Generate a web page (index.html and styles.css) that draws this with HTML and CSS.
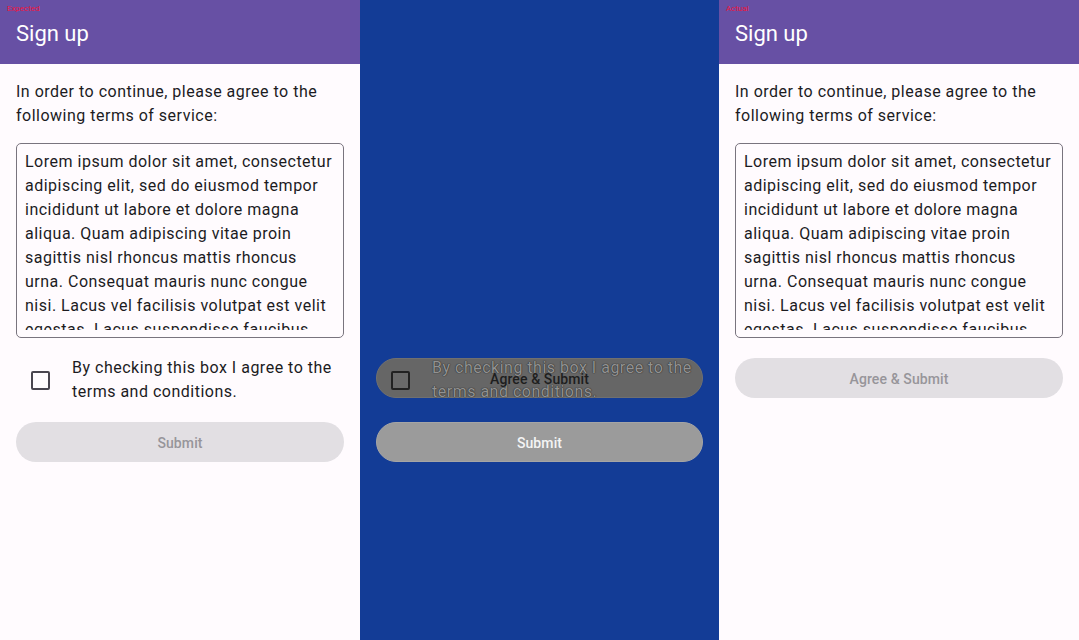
FILE: index.html
```html
<!DOCTYPE html>
<html>
<head>
<meta charset="utf-8">
<link rel="stylesheet" href="styles.css">
</head>
<body>
<div class="frame">
  <section class="panel">
    <span class="tag">Expected</span>
    <header class="appbar">Sign up</header>
    <div class="content">
      <p class="intro">In order to continue, please agree to the following terms of service:</p>
      <div class="terms"><div class="terms-inner">Lorem ipsum dolor sit amet, consectetur adipiscing elit, sed do eiusmod tempor incididunt ut labore et dolore magna aliqua. Quam adipiscing vitae proin sagittis nisl rhoncus mattis rhoncus urna. Consequat mauris nunc congue nisi. Lacus vel facilisis volutpat est velit egestas. Lacus suspendisse faucibus interdum posuere lorem ipsum dolor sit amet.</div></div>
      <div class="check-row">
        <div class="check-target"><span class="checkbox"></span></div>
        <span class="check-label">By checking this box I agree to the terms and conditions.</span>
      </div>
      <div class="btn btn-disabled btn-submit">Submit</div>
    </div>
  </section>

  <section class="panel diff">
    <div class="diff-content">
      <div class="diff-stack">
        <div class="diff-pill"></div>
        <div class="check-row ghost">
          <div class="check-target"><span class="checkbox ghost-box"></span></div>
          <span class="check-label ghost-label">By checking this box I agree to the terms and conditions.</span>
        </div>
        <div class="diff-agree">Agree &amp; Submit</div>
      </div>
      <div class="btn diff-submit">Submit</div>
    </div>
  </section>

  <section class="panel">
    <span class="tag">Actual</span>
    <header class="appbar">Sign up</header>
    <div class="content">
      <p class="intro">In order to continue, please agree to the following terms of service:</p>
      <div class="terms"><div class="terms-inner">Lorem ipsum dolor sit amet, consectetur adipiscing elit, sed do eiusmod tempor incididunt ut labore et dolore magna aliqua. Quam adipiscing vitae proin sagittis nisl rhoncus mattis rhoncus urna. Consequat mauris nunc congue nisi. Lacus vel facilisis volutpat est velit egestas. Lacus suspendisse faucibus interdum posuere lorem ipsum dolor sit amet.</div></div>
      <div class="btn btn-disabled btn-agree">Agree &amp; Submit</div>
    </div>
  </section>
</div>
</body>
</html>
```

FILE: styles.css
```css
* { box-sizing: border-box; }
html, body {
  margin: 0;
  padding: 0;
  width: 1079px;
  height: 640px;
  overflow: hidden;
  font-family: Roboto, "Noto Sans", "Liberation Sans", sans-serif;
}
.frame {
  display: grid;
  grid-template-columns: 360px 359px 360px;
  height: 640px;
}
.panel {
  position: relative;
  background: #FFFBFE;
  height: 640px;
  display: flex;
  flex-direction: column;
}
.tag {
  position: absolute;
  left: 7px;
  top: 4px;
  font-size: 8px;
  line-height: 10px;
  color: #f0143c;
}
.appbar {
  height: 64px;
  flex: none;
  background: #6750A4;
  color: #ffffff;
  font-size: 22px;
  line-height: 28px;
  padding: 20px 16px 16px;
}
.content {
  padding: 16px 16px 0;
  display: flex;
  flex-direction: column;
  color: #1C1B1F;
}
.intro {
  margin: 0;
  font-size: 16px;
  line-height: 24px;
  letter-spacing: 0.5px;
}
.terms {
  margin-top: 15px;
  border: 1px solid #79747E;
  border-radius: 5px;
  padding: 6px 8px 7px;
}
.terms-inner {
  height: 180px;
  overflow: hidden;
  font-size: 16px;
  line-height: 24px;
  letter-spacing: 0.5px;
}
.check-row {
  display: flex;
  align-items: center;
  margin-top: 18px;
}
.check-target {
  width: 48px;
  height: 48px;
  flex: none;
  display: flex;
  align-items: center;
  justify-content: center;
}
.checkbox {
  width: 19px;
  height: 19px;
  border: 2px solid #49454F;
  border-radius: 2px;
}
.check-label {
  margin-left: 8px;
  font-size: 16px;
  line-height: 24px;
  letter-spacing: 0.5px;
}
.btn {
  height: 40px;
  border-radius: 20px;
  display: flex;
  align-items: center;
  justify-content: center;
  padding-top: 2px;
  font-size: 14px;
  font-weight: 500;
  letter-spacing: 0.1px;
}
.btn-disabled {
  background: #E2DFE3;
  color: #97959A;
}
.btn-submit { margin-top: 18px; }
.btn-agree { margin-top: 20px; }

.diff { background: #133C96; }
.diff-content {
  padding: 354px 16px 0;
  display: flex;
  flex-direction: column;
}
.diff-stack {
  display: grid;
}
.diff-stack > * { grid-area: 1 / 1; }
.diff-pill {
  align-self: start;
  margin-top: 4px;
  height: 40px;
  border-radius: 20px;
  background: #666666;
  border: 1px solid #707070;
}
.check-row.ghost { margin-top: 0; padding-top: 2px; align-self: start; }
.ghost-box {
  border-color: #222222;
  background: #6a6a6a;
}
.ghost-label {
  color: #929292;
  text-shadow: 0 0 1px #2a2a2a, 0 0 1px #2a2a2a;
}
.diff-agree {
  align-self: start;
  justify-self: center;
  margin-top: 4px;
  height: 40px;
  display: flex;
  align-items: center;
  padding-top: 2px;
  font-size: 14px;
  font-weight: 500;
  letter-spacing: 0.1px;
  color: #1e1e1e;
}
.diff-submit {
  margin-top: 18px;
  background: #9B9B9B;
  color: #f4f4f4;
  border: 1px solid #a5a5a5;
}
```
